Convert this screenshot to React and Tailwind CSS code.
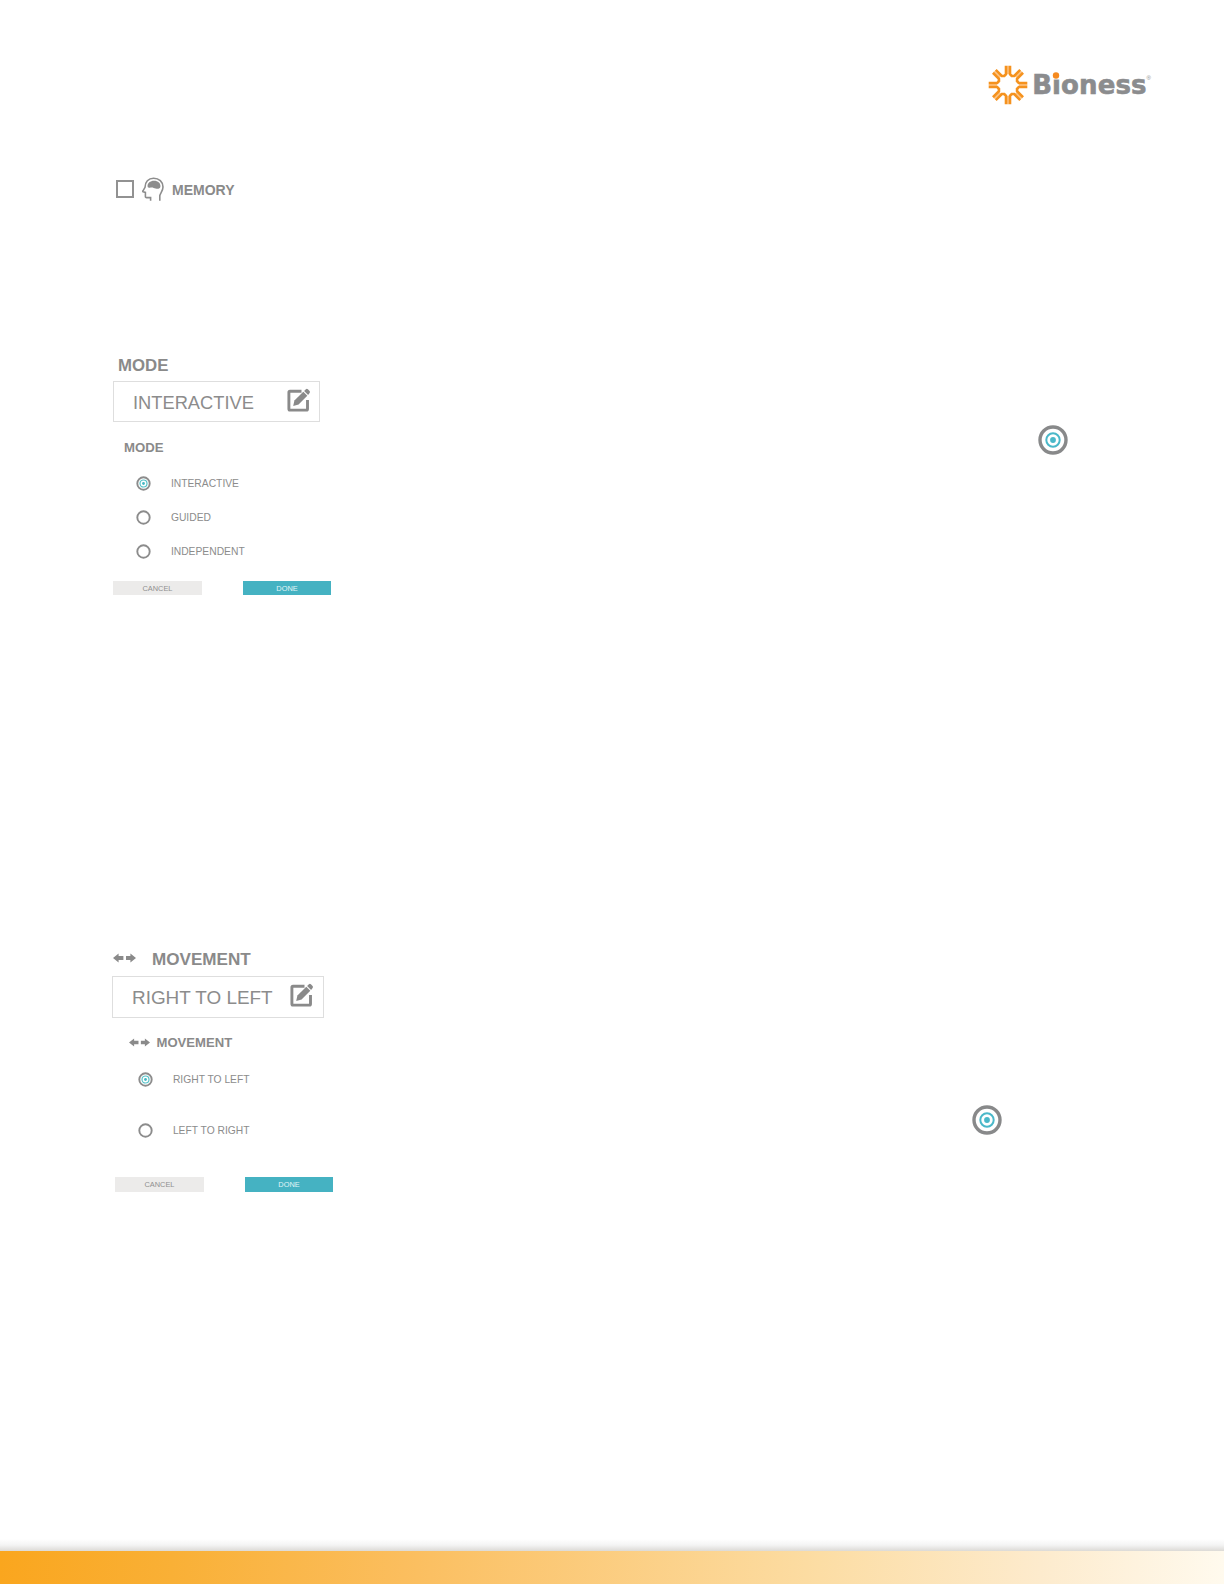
import React from "react";

function Sunburst() {
  const rays = [0, 45, 90, 135, 180, 225, 270, 315];
  return (
    <svg className="h-10 w-10 shrink-0" viewBox="-20 -20 40 40" fill="none">
      {rays.map((angle) => (
        <g key={angle} transform={`rotate(${angle})`}>
          <path d="M0 -19.3V-11" stroke="#fcc588" strokeWidth="2" />
          <path d="M-2 -19.3V-10.8L-4.1 -8.7M2 -19.3V-10.8L4.1 -8.7" stroke="#f5921e" strokeWidth="2.6" />
        </g>
      ))}
    </svg>
  );
}

function Logo() {
  return (
    <div className="flex items-center">
      <Sunburst />
      <div className="relative ml-[4px] flex">
        <span className="font-['DejaVu_Sans'] text-[26px] leading-[40px] font-bold tracking-[0.1px] text-[#8b8c8e] [-webkit-text-stroke:0.6px_#8b8c8e]">
          Bioness
        </span>
        <svg className="absolute top-[5px] left-[19px] h-[10px] w-[10px]" viewBox="0 0 10 10">
          <rect width="9" height="9.5" fill="#fff" />
          <circle cx="5" cy="5.5" r="3.2" fill="#f58a1f" />
        </svg>
        <span className="mt-[9px] text-[6px] leading-[8px] text-[#8b8c8e]">®</span>
      </div>
    </div>
  );
}

function HeadIcon() {
  return (
    <svg className="h-[26px] w-[24px] shrink-0" viewBox="0 0 24 26" fill="none" stroke="#8d8d8d" strokeWidth="1.6">
      <path d="M9.6 24.8V21.6H5.6Q4.3 21.6 4.4 20.3V16.4L2 15.8Q1.5 15.5 2 14.8L4 11.4C3.9 6 7.5 2.2 12.6 2.2C18 2.2 22 5.9 22 11C22 15 19.2 17 18.8 19.6V24.8" />
      <path d="M6.6 10.4C6.2 7.1 9.3 4.8 13 4.8C17 4.8 19.9 7.4 19.4 10.8C19 13.2 16.4 13 14.6 12.6C13 12.3 12.2 11.6 10.8 11.6C8.8 11.7 6.8 12 6.6 10.4Z" fill="#8d8d8d" stroke="none" />
    </svg>
  );
}

function EditIcon() {
  return (
    <svg className="h-[24px] w-[24px] shrink-0" viewBox="0 0 24 24">
      <path d="M14.5 3.2H3Q1.9 3.2 1.9 4.3V21Q1.9 22.1 3 22.1H19.4Q20.5 22.1 20.5 21V12" fill="none" stroke="#8a8a8a" strokeWidth="2.9" />
      <path d="M6.2 18L7.4 12.6L16.3 3.7L20.3 7.7L11.6 16.5Z" fill="#8a8a8a" />
      <path d="M17.1 2.9L18.9 1.2Q19.9 0.4 20.9 1.3L22.6 3Q23.4 4 22.6 5L21.1 6.9Z" fill="#8a8a8a" />
    </svg>
  );
}

function Arrows({ className }) {
  return (
    <svg className={className} viewBox="0 0 23 9" fill="#8a8a8a">
      <path d="M0 4.5L5.6 0V2.6H10.4V6.4H5.6V9Z" />
      <path d="M23 4.5L17.4 0V2.6H13V6.4H17.4V9Z" />
    </svg>
  );
}

function Target({ className }) {
  return (
    <svg className={className} viewBox="0 0 30 30" fill="none">
      <circle cx="15" cy="15" r="13" stroke="#88898a" strokeWidth="3.4" />
      <circle cx="15" cy="15" r="6.7" stroke="#4ab8c9" strokeWidth="2" />
      <circle cx="15" cy="15" r="2.9" fill="#4ab8c9" />
    </svg>
  );
}

function Radio({ checked }) {
  return (
    <svg className="h-[15px] w-[15px] shrink-0" viewBox="0 0 15 15" fill="none">
      <circle cx="7.5" cy="7.5" r="6.2" stroke="#8c8c8c" strokeWidth="1.9" />
      {checked && <circle cx="7.5" cy="7.5" r="3.5" stroke="#55c2c8" strokeWidth="1.2" />}
      {checked && <circle cx="7.5" cy="7.5" r="1.4" fill="#45b9c4" />}
    </svg>
  );
}

function Option({ label, checked, className }) {
  return (
    <div className={`flex items-center ${className}`}>
      <Radio checked={checked} />
      <span className="mt-[2px] ml-[19.5px] text-[10.3px] whitespace-nowrap text-[#8c8c8c]">{label}</span>
    </div>
  );
}

function Buttons({ className }) {
  return (
    <div className={`flex text-[7.4px] ${className}`}>
      <button className="flex w-[89px] items-center justify-center bg-[#ecebea] pt-px text-[#8f8f8f]">CANCEL</button>
      <button className="ml-[41px] flex w-[88px] items-center justify-center bg-[#45b2c2] pt-px text-[#e3f5f7]">DONE</button>
    </div>
  );
}

export default function App() {
  return (
    <div className="flex h-[1584px] w-[1224px] flex-col overflow-hidden bg-white font-['Liberation_Sans',sans-serif] text-[#8a8a8a]">
      <header className="flex h-[169px] shrink-0 items-center justify-end pr-[73px]">
        <Logo />
      </header>

      <div className="flex h-10 shrink-0 items-center pl-[116px]">
        <span className="h-[18px] w-[18px] border-2 border-[#929292]" />
        <span className="ml-[7px] flex">
          <HeadIcon />
        </span>
        <span className="mt-[3px] ml-[7px] text-[14px] font-bold">MEMORY</span>
      </div>

      <section className="mt-[142px] flex shrink-0">
        <div className="flex w-[926px] flex-col pl-[113px]">
          <h2 className="pl-[5px] text-[16.8px] leading-[30px] font-bold">MODE</h2>
          <div className="flex h-[41px] w-[207px] items-center justify-between border border-[#dedede] pr-[8px] pl-[19px]">
            <span className="mt-[2px] text-[18.3px] text-[#8c8c8c]">INTERACTIVE</span>
            <span className="mb-[3px] flex">
              <EditIcon />
            </span>
          </div>
          <h3 className="mt-[13px] pl-[11px] text-[13.2px] leading-[26px] font-bold">MODE</h3>
          <div className="mt-[5px] pl-[23.4px]">
            <Option className="h-[34px]" label="INTERACTIVE" checked />
            <Option className="h-[34px]" label="GUIDED" />
            <Option className="h-[34px]" label="INDEPENDENT" />
          </div>
          <Buttons className="mt-[13px] h-[14px]" />
        </div>
        <Target className="mt-[74px] ml-[112.4px] h-[30px] w-[30px]" />
      </section>

      <section className="mt-[348px] flex shrink-0">
        <div className="flex w-[926px] flex-col pl-[112px]">
          <h2 className="flex h-[33px] items-center text-[17.1px] font-bold">
            <Arrows className="mt-[-4px] ml-[1px] h-[10px] w-[23px]" />
            <span className="ml-[16px]">MOVEMENT</span>
          </h2>
          <div className="flex h-[42px] w-[212px] items-center justify-between border border-[#dedede] pr-[9px] pl-[19px]">
            <span className="mt-[2px] text-[18.9px] whitespace-nowrap text-[#8c8c8c]">RIGHT TO LEFT</span>
            <span className="mb-[4px] flex">
              <EditIcon />
            </span>
          </div>
          <h3 className="mt-[12px] flex h-[26px] items-center pl-[17px] text-[13.1px] font-bold">
            <Arrows className="mt-[-2px] h-[9px] w-[21px]" />
            <span className="ml-[6.5px]">MOVEMENT</span>
          </h3>
          <div className="pl-[26.4px]">
            <Option className="h-[46px]" label="RIGHT TO LEFT" checked />
            <Option className="h-[56px]" label="LEFT TO RIGHT" />
          </div>
          <Buttons className="mt-[19px] ml-[3px] h-[15px]" />
        </div>
        <Target className="mt-[162px] ml-[46.4px] h-[30px] w-[30px]" />
      </section>

      <footer className="mt-auto">
        <div className="h-[12px] bg-gradient-to-b from-white via-[#f4f4f4] to-[#dcdad6]" />
        <div className="h-[33px] bg-[linear-gradient(90deg,#faa61e_0%,#f9b036_14%,#fbbe5e_33%,#fcdda4_67%,#fdebcd_85%,#fffaee_100%)]" />
      </footer>
    </div>
  );
}
